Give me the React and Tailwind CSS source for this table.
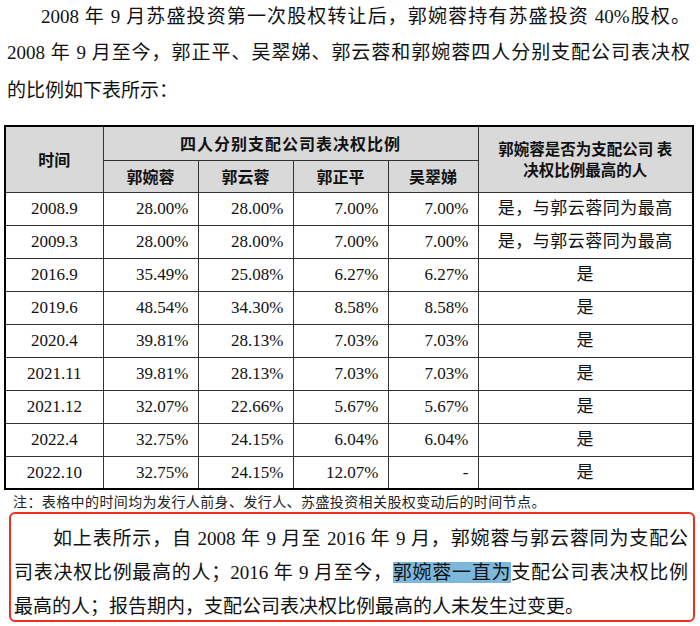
import React from "react";

const rows = [
  ["2008.9", "28.00%", "28.00%", "7.00%", "7.00%", "是，与郭云蓉同为最高"],
  ["2009.3", "28.00%", "28.00%", "7.00%", "7.00%", "是，与郭云蓉同为最高"],
  ["2016.9", "35.49%", "25.08%", "6.27%", "6.27%", "是"],
  ["2019.6", "48.54%", "34.30%", "8.58%", "8.58%", "是"],
  ["2020.4", "39.81%", "28.13%", "7.03%", "7.03%", "是"],
  ["2021.11", "39.81%", "28.13%", "7.03%", "7.03%", "是"],
  ["2021.12", "32.07%", "22.66%", "5.67%", "5.67%", "是"],
  ["2022.4", "32.75%", "24.15%", "6.04%", "6.04%", "是"],
  ["2022.10", "32.75%", "24.15%", "12.07%", "-", "是"],
];

const serif = "font-['Liberation_Serif','Noto_Sans_CJK_SC',serif]";
const sans = "font-['Noto_Sans_CJK_SC','Liberation_Sans',sans-serif]";

function JLine({ children, className = "" }) {
  return (
    <div className={"text-justify [text-align-last:justify] " + className}>
      {children}
    </div>
  );
}

export default function App() {
  return (
    <div className={"w-[700px] h-[626px] bg-white overflow-hidden text-[#111] " + serif}>
      {/* top paragraph */}
      <div className="pl-[7px] pr-[10px] text-[19px]">
        <JLine className="pl-[34px] h-[34px] leading-[34px]">
          2008 年 9 月苏盛投资第一次股权转让后，郭婉蓉持有苏盛投资 40%股权。
        </JLine>
        <JLine className="h-[38px] leading-[38px]">
          2008 年 9 月至今，郭正平、吴翠娣、郭云蓉和郭婉蓉四人分别支配公司表决权
        </JLine>
        <div className="h-[38px] leading-[38px]">的比例如下表所示：</div>
      </div>

      {/* table */}
      <div className="mt-[15px] ml-[4px] w-[690px]">
        <table className="w-full border-collapse border-2 border-black table-fixed">
          <colgroup>
            <col className="w-[98px]" />
            <col className="w-[95px]" />
            <col className="w-[95px]" />
            <col className="w-[95px]" />
            <col className="w-[90px]" />
            <col />
          </colgroup>
          <thead className={"bg-[#d9d9d9] font-bold text-[16px] " + sans}>
            <tr className="h-[34px]">
              <th rowSpan={2} className="border border-[#333] font-bold text-center">
                时间
              </th>
              <th colSpan={4} className="border border-[#333] font-bold text-center tracking-[1px]">
                四人分别支配公司表决权比例
              </th>
              <th rowSpan={2} className="border border-[#333] font-bold text-center leading-[21px] text-[15.5px] whitespace-nowrap">
                郭婉蓉是否为支配公司 表
                <br />
                决权比例最高的人
              </th>
            </tr>
            <tr className="h-[32px]">
              <th className="border border-[#333] font-bold text-center">郭婉蓉</th>
              <th className="border border-[#333] font-bold text-center">郭云蓉</th>
              <th className="border border-[#333] font-bold text-center">郭正平</th>
              <th className="border border-[#333] font-bold text-center">吴翠娣</th>
            </tr>
          </thead>
          <tbody className="text-[17px]">
            {rows.map((r, i) => (
              <tr key={i} className="h-[33px]">
                <td className="border border-[#333] text-center">{r[0]}</td>
                <td className="border border-[#333] text-right pr-[9px]">{r[1]}</td>
                <td className="border border-[#333] text-right pr-[9px]">{r[2]}</td>
                <td className="border border-[#333] text-right pr-[9px]">{r[3]}</td>
                <td className="border border-[#333] text-right pr-[9px]">{r[4]}</td>
                <td className="border border-[#333] text-center tracking-[0.5px]">{r[5]}</td>
              </tr>
            ))}
          </tbody>
        </table>
      </div>

      {/* note */}
      <div className={"pl-[13px] h-[22px] leading-[22px] text-[14px] tracking-[0.4px] text-[#222] " + sans}>
        注：表格中的时间均为发行人前身、发行人、苏盛投资相关股权变动后的时间节点。
      </div>

      {/* red box */}
      <div className="ml-[9px] w-[686px] h-[110px] border-2 border-[#ef2f1d] rounded-[6px] pl-[3px] pr-[5px] pt-[8px] text-[19px]">
        <JLine className="pl-[39px] h-[34px] leading-[34px]">
          如上表所示，自 2008 年 9 月至 2016 年 9 月，郭婉蓉与郭云蓉同为支配公
        </JLine>
        <JLine className="h-[34px] leading-[34px]">
          司表决权比例最高的人；2016 年 9 月至今，
          <span className="bg-[#7db8dc]">郭婉蓉一直为</span>
          支配公司表决权比例
        </JLine>
        <div className="h-[34px] leading-[34px]">
          最高的人；报告期内，支配公司表决权比例最高的人未发生过变更。
        </div>
      </div>
    </div>
  );
}
